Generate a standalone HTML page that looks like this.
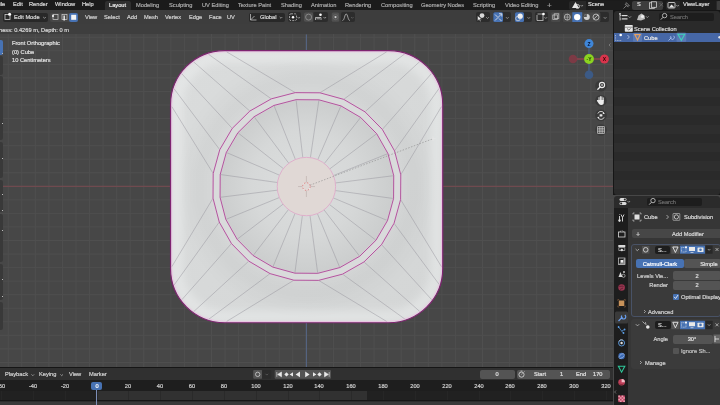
<!DOCTYPE html>
<html><head><meta charset="utf-8">
<style>
*{margin:0;padding:0;box-sizing:border-box}
html,body{width:720px;height:405px;overflow:hidden;background:#474747;font-family:"Liberation Sans",sans-serif;font-size:5.7px;color:#d0d0d0}
.a{position:absolute}
.t{position:absolute;white-space:nowrap;line-height:1;-webkit-text-stroke:0.2px currentColor;will-change:transform}
</style></head><body>
<svg width="720" height="405" style="position:absolute;left:0;top:0">
<defs>
<clipPath id="csq"><path d="M224.55,50.55 H388.75 A54.00,54.00 0 0 1 442.75,104.55 V268.75 A54.00,54.00 0 0 1 388.75,322.75 H224.55 A54.00,54.00 0 0 1 170.55,268.75 V104.55 A54.00,54.00 0 0 1 224.55,50.55 Z"/></clipPath>
<filter id="bl4" x="-20%" y="-20%" width="140%" height="140%"><feGaussianBlur stdDeviation="4"/></filter>
<filter id="bl8" x="-50%" y="-50%" width="200%" height="200%"><feGaussianBlur stdDeviation="9"/></filter>
<linearGradient id="gsq" x1="171" y1="51" x2="441" y2="322" gradientUnits="userSpaceOnUse">
<stop offset="0" stop-color="#dadcdc"/><stop offset="1" stop-color="#d4d6d6"/>
</linearGradient>
<radialGradient id="gin" cx="306.9" cy="186.5" r="88" fx="300" fy="180" gradientUnits="userSpaceOnUse">
<stop offset="0" stop-color="#dcdede"/><stop offset="0.6" stop-color="#d6d8d8"/><stop offset="1" stop-color="#cbcdcd"/>
</radialGradient>
</defs>
<path d="M8.25,23 V367M21.80,23 V367M35.35,23 V367M48.90,23 V367M62.45,23 V367M76.00,23 V367M89.55,23 V367M103.10,23 V367M116.65,23 V367M130.20,23 V367M143.75,23 V367M157.30,23 V367M170.85,23 V367M184.40,23 V367M197.95,23 V367M211.50,23 V367M225.05,23 V367M238.60,23 V367M252.15,23 V367M265.70,23 V367M279.25,23 V367M292.80,23 V367M306.35,23 V367M319.90,23 V367M333.45,23 V367M347.00,23 V367M360.55,23 V367M374.10,23 V367M387.65,23 V367M401.20,23 V367M414.75,23 V367M428.30,23 V367M441.85,23 V367M455.40,23 V367M468.95,23 V367M482.50,23 V367M496.05,23 V367M509.60,23 V367M523.15,23 V367M536.70,23 V367M550.25,23 V367M563.80,23 V367M577.35,23 V367M590.90,23 V367M604.45,23 V367M0,23.70 H613M0,37.25 H613M0,50.80 H613M0,64.35 H613M0,77.90 H613M0,91.45 H613M0,105.00 H613M0,118.55 H613M0,132.10 H613M0,145.65 H613M0,159.20 H613M0,172.75 H613M0,186.30 H613M0,199.85 H613M0,213.40 H613M0,226.95 H613M0,240.50 H613M0,254.05 H613M0,267.60 H613M0,281.15 H613M0,294.70 H613M0,308.25 H613M0,321.80 H613M0,335.35 H613M0,348.90 H613M0,362.45 H613" stroke="#4f4f4f" stroke-width="1" fill="none"/>
<path d="M0,186.3 H613" stroke="#7a4a50" stroke-width="1"/>
<path d="M306.35,34.5 V367" stroke="#56678a" stroke-width="1"/>
<path d="M224.55,50.55 H388.75 A54.00,54.00 0 0 1 442.75,104.55 V268.75 A54.00,54.00 0 0 1 388.75,322.75 H224.55 A54.00,54.00 0 0 1 170.55,268.75 V104.55 A54.00,54.00 0 0 1 224.55,50.55 Z" fill="url(#gsq)"/>
<g clip-path="url(#csq)">
<path d="M321.74,79.52 L348.93,87.01 L373.24,101.28 L393.04,121.35 L406.97,145.87 L414.07,173.15 L413.88,201.34 L406.39,228.53 L392.12,252.84 L372.05,272.64 L347.53,286.57 L320.25,293.67 L292.06,293.48 L264.87,285.99 L240.56,271.72 L220.76,251.65 L206.83,227.13 L199.73,199.85 L199.92,171.66 L207.41,144.47 L221.68,120.16 L241.75,100.36 L266.27,86.43 L293.55,79.33 Z" fill="none" stroke="#000" stroke-opacity="0.04" stroke-width="18" filter="url(#bl8)"/>
<path d="M224.55,56.55 H388.75 A48.00,48.00 0 0 1 436.75,104.55 V268.75 A48.00,48.00 0 0 1 388.75,316.75 H224.55 A48.00,48.00 0 0 1 176.55,268.75 V104.55 A48.00,48.00 0 0 1 224.55,56.55 Z" fill="none" stroke="#f4f6f6" stroke-opacity="0.42" stroke-width="12" filter="url(#bl4)"/>
</g>
<path d="M224.55,51.85 H388.75 A52.70,52.70 0 0 1 441.45,104.55 V268.75 A52.70,52.70 0 0 1 388.75,321.45 H224.55 A52.70,52.70 0 0 1 171.85,268.75 V104.55 A52.70,52.70 0 0 1 224.55,51.85 Z" fill="none" stroke="#ecc4e4" stroke-width="1.0" opacity="0.9"/>
<path d="M224.55,50.55 H388.75 A54.00,54.00 0 0 1 442.75,104.55 V268.75 A54.00,54.00 0 0 1 388.75,322.75 H224.55 A54.00,54.00 0 0 1 170.55,268.75 V104.55 A54.00,54.00 0 0 1 224.55,50.55 Z" fill="none" stroke="#7e2470" stroke-width="1.2"/>
<path d="M319.90,92.80 L386.65,51.85M343.71,99.36 L404.55,54.05M365.01,111.85 L419.65,61.65M382.35,129.44 L431.40,73.65M394.55,150.91 L439.05,88.45M400.77,174.81 L441.45,106.65M400.60,199.50 L441.45,266.65M394.04,223.31 L439.25,284.55M381.55,244.61 L431.65,299.65M363.96,261.95 L419.65,311.40M342.49,274.15 L404.85,319.05M318.59,280.37 L386.65,321.45M293.90,280.20 L226.65,321.45M270.09,273.64 L208.75,319.25M248.79,261.15 L193.65,311.65M231.45,243.56 L181.90,299.65M219.25,222.09 L174.25,284.85M213.03,198.19 L171.85,266.65M213.20,173.50 L171.85,106.65M219.76,149.69 L174.05,88.75M232.25,128.39 L181.65,73.65M249.84,111.05 L193.65,61.90M271.31,98.85 L208.45,54.25M295.21,92.63 L226.65,51.85" stroke="#8c8a92" stroke-width="0.42" fill="none"/>
<path d="M319.90,92.80 L343.71,99.36 L365.01,111.85 L382.35,129.44 L394.55,150.91 L400.77,174.81 L400.60,199.50 L394.04,223.31 L381.55,244.61 L363.96,261.95 L342.49,274.15 L318.59,280.37 L293.90,280.20 L270.09,273.64 L248.79,261.15 L231.45,243.56 L219.25,222.09 L213.03,198.19 L213.20,173.50 L219.76,149.69 L232.25,128.39 L249.84,111.05 L271.31,98.85 L295.21,92.63 Z" fill="#d9dbdb"/>
<path d="M318.93,99.83 L340.95,105.90 L360.65,117.46 L376.69,133.72 L387.97,153.58 L393.73,175.68 L393.57,198.53 L387.50,220.55 L375.94,240.25 L359.68,256.29 L339.82,267.57 L317.72,273.33 L294.87,273.17 L272.85,267.10 L253.15,255.54 L237.11,239.28 L225.83,219.42 L220.07,197.32 L220.23,174.47 L226.30,152.45 L237.86,132.75 L254.12,116.71 L273.98,105.43 L296.08,99.67 Z" fill="url(#gin)"/>
<path d="M318.93,99.83 L310.41,157.63M340.95,105.90 L317.76,159.65M360.65,117.46 L324.34,163.51M376.69,133.72 L329.69,168.94M387.97,153.58 L333.45,175.56M393.73,175.68 L335.38,182.94M393.57,198.53 L335.32,190.56M387.50,220.55 L333.30,197.91M375.94,240.25 L329.44,204.49M359.68,256.29 L324.01,209.84M339.82,267.57 L317.39,213.60M317.72,273.33 L310.01,215.53M294.87,273.17 L302.39,215.47M272.85,267.10 L295.04,213.45M253.15,255.54 L288.46,209.59M237.11,239.28 L283.11,204.16M225.83,219.42 L279.35,197.54M220.07,197.32 L277.42,190.16M220.23,174.47 L277.48,182.54M226.30,152.45 L279.50,175.19M237.86,132.75 L283.36,168.61M254.12,116.71 L288.79,163.26M273.98,105.43 L295.41,159.50M296.08,99.67 L302.79,157.57" stroke="#8c8a92" stroke-width="0.42" fill="none"/>
<path d="M319.90,92.80 L343.71,99.36 L365.01,111.85 L382.35,129.44 L394.55,150.91 L400.77,174.81 L400.60,199.50 L394.04,223.31 L381.55,244.61 L363.96,261.95 L342.49,274.15 L318.59,280.37 L293.90,280.20 L270.09,273.64 L248.79,261.15 L231.45,243.56 L219.25,222.09 L213.03,198.19 L213.20,173.50 L219.76,149.69 L232.25,128.39 L249.84,111.05 L271.31,98.85 L295.21,92.63 ZM318.93,99.83 L340.95,105.90 L360.65,117.46 L376.69,133.72 L387.97,153.58 L393.73,175.68 L393.57,198.53 L387.50,220.55 L375.94,240.25 L359.68,256.29 L339.82,267.57 L317.72,273.33 L294.87,273.17 L272.85,267.10 L253.15,255.54 L237.11,239.28 L225.83,219.42 L220.07,197.32 L220.23,174.47 L226.30,152.45 L237.86,132.75 L254.12,116.71 L273.98,105.43 L296.08,99.67 Z" fill="none" stroke="#f0c4e4" stroke-width="1.8" opacity="0.4"/>
<path d="M319.90,92.80 L343.71,99.36 L365.01,111.85 L382.35,129.44 L394.55,150.91 L400.77,174.81 L400.60,199.50 L394.04,223.31 L381.55,244.61 L363.96,261.95 L342.49,274.15 L318.59,280.37 L293.90,280.20 L270.09,273.64 L248.79,261.15 L231.45,243.56 L219.25,222.09 L213.03,198.19 L213.20,173.50 L219.76,149.69 L232.25,128.39 L249.84,111.05 L271.31,98.85 L295.21,92.63 ZM318.93,99.83 L340.95,105.90 L360.65,117.46 L376.69,133.72 L387.97,153.58 L393.73,175.68 L393.57,198.53 L387.50,220.55 L375.94,240.25 L359.68,256.29 L339.82,267.57 L317.72,273.33 L294.87,273.17 L272.85,267.10 L253.15,255.54 L237.11,239.28 L225.83,219.42 L220.07,197.32 L220.23,174.47 L226.30,152.45 L237.86,132.75 L254.12,116.71 L273.98,105.43 L296.08,99.67 Z" fill="none" stroke="#a03088" stroke-width="0.75"/>
<circle cx="306.4" cy="186.55" r="29.2" fill="#e0d8d5" stroke="#e0a4c8" stroke-width="0.8"/>
<path d="M310,185.2 L433,138.7" stroke="#8a8a8a" stroke-width="0.6" stroke-dasharray="1.5,1.5"/>
</svg>
<div class="a" style="left:0px;top:0px;width:720px;height:10.4px;background:#1b1b1b;border-radius:0px;"></div>
<div class="t" style="left:-3.8px;top:2.10px;color:#d8d8d8;font-size:5.7px;">File</div>
<div class="t" style="left:12.6px;top:2.10px;color:#d8d8d8;font-size:5.7px;">Edit</div>
<div class="t" style="left:29.0px;top:2.10px;color:#d8d8d8;font-size:5.7px;">Render</div>
<div class="t" style="left:54.5px;top:2.10px;color:#d8d8d8;font-size:5.7px;">Window</div>
<div class="t" style="left:81.5px;top:2.10px;color:#d8d8d8;font-size:5.7px;">Help</div>
<div class="a" style="left:104.7px;top:0.7px;width:26.4px;height:9.7px;background:#2f2f2f;border-radius:2px 2px 0 0px;"></div>
<div class="t" style="left:109.4px;top:2.70px;color:#e8e8e8;font-size:5.7px;">Layout</div>
<div class="t" style="left:135.8px;top:2.70px;color:#a8a8a8;font-size:5.7px;">Modeling</div>
<div class="t" style="left:168.8px;top:2.70px;color:#a8a8a8;font-size:5.7px;">Sculpting</div>
<div class="t" style="left:202.3px;top:2.70px;color:#a8a8a8;font-size:5.7px;">UV Editing</div>
<div class="t" style="left:237.8px;top:2.70px;color:#a8a8a8;font-size:5.7px;">Texture Paint</div>
<div class="t" style="left:280.8px;top:2.70px;color:#a8a8a8;font-size:5.7px;">Shading</div>
<div class="t" style="left:310.8px;top:2.70px;color:#a8a8a8;font-size:5.7px;">Animation</div>
<div class="t" style="left:345.3px;top:2.70px;color:#a8a8a8;font-size:5.7px;">Rendering</div>
<div class="t" style="left:380.8px;top:2.70px;color:#a8a8a8;font-size:5.7px;">Compositing</div>
<div class="t" style="left:421.3px;top:2.70px;color:#a8a8a8;font-size:5.7px;">Geometry Nodes</div>
<div class="t" style="left:472.8px;top:2.70px;color:#a8a8a8;font-size:5.7px;">Scripting</div>
<div class="t" style="left:504.8px;top:2.70px;color:#a8a8a8;font-size:5.7px;">Video Editing</div>
<div class="t" style="left:546.5px;top:1.73px;color:#a0a0a0;font-size:8px;">+</div>
<div class="a" style="left:568.9px;top:1px;width:64px;height:8.6px;background:#282828;border-radius:2px;"></div>
<div class="a" style="left:585.5px;top:1px;width:46px;height:8.6px;background:#1d1d1d;border-radius:0px;"></div>
<div class="t" style="left:587.8px;top:2.30px;color:#dcdcdc;font-size:5.7px;">Scene</div>
<div class="a" style="left:632.2px;top:1px;width:30.5px;height:8.6px;background:#3d3d3d;border-radius:2px;"></div>
<div class="t" style="left:636.8px;top:2.30px;color:#dcdcdc;font-size:5.7px;">S</div>
<div class="a" style="left:666px;top:1px;width:54px;height:8.6px;background:#282828;border-radius:2px;"></div>
<div class="a" style="left:680px;top:1px;width:36px;height:8.6px;background:#1d1d1d;border-radius:0px;"></div>
<div class="t" style="left:683.3px;top:2.30px;color:#dcdcdc;font-size:5.7px;">ViewLayer</div>
<div class="a" style="left:716.5px;top:1px;width:4px;height:8.6px;background:#3d3d3d;border-radius:1px;"></div>
<div class="a" style="left:0px;top:10.4px;width:613px;height:13.2px;background:#3d3d3d;border-radius:0px;"></div>
<div class="a" style="left:3.3px;top:12.8px;width:44.8px;height:9.2px;background:#282828;border-radius:2px;"></div>
<div class="t" style="left:13.8px;top:15.20px;color:#d8d8d8;font-size:5.7px;">Edit Mode</div>
<div class="t" style="left:85px;top:15.20px;color:#d0d0d0;font-size:5.7px;">View</div>
<div class="t" style="left:104px;top:15.20px;color:#d0d0d0;font-size:5.7px;">Select</div>
<div class="t" style="left:126.8px;top:15.20px;color:#d0d0d0;font-size:5.7px;">Add</div>
<div class="t" style="left:143.8px;top:15.20px;color:#d0d0d0;font-size:5.7px;">Mesh</div>
<div class="t" style="left:164.8px;top:15.20px;color:#d0d0d0;font-size:5.7px;">Vertex</div>
<div class="t" style="left:188.8px;top:15.20px;color:#d0d0d0;font-size:5.7px;">Edge</div>
<div class="t" style="left:208.8px;top:15.20px;color:#d0d0d0;font-size:5.7px;">Face</div>
<div class="t" style="left:227.3px;top:15.20px;color:#d0d0d0;font-size:5.7px;">UV</div>
<div class="a" style="left:249px;top:12.8px;width:35.5px;height:9.2px;background:#282828;border-radius:2px;"></div>
<div class="t" style="left:259.5px;top:15.20px;color:#d8d8d8;font-size:5.7px;">Global</div>
<div class="a" style="left:50.3px;top:12.8px;width:28px;height:9.2px;background:#474747;border-radius:2px;"></div>
<div class="a" style="left:69.2px;top:12.8px;width:9.1px;height:9.2px;background:#4772b3;border-radius:2px;"></div>
<div class="a" style="left:287.5px;top:12.4px;width:13.300000000000011px;height:9.5px;background:#2c2c2c;border-radius:2px;"></div>
<div class="a" style="left:313.3px;top:12.4px;width:15.0px;height:9.5px;background:#2c2c2c;border-radius:2px;"></div>
<div class="a" style="left:340.5px;top:12.4px;width:14.5px;height:9.5px;background:#2c2c2c;border-radius:2px;"></div>
<div class="a" style="left:475.8px;top:12.2px;width:14.599999999999966px;height:9.8px;background:#2c2c2c;border-radius:2px;"></div>
<div class="a" style="left:493.3px;top:12.2px;width:17.69999999999999px;height:9.8px;background:#2c2c2c;border-radius:2px;"></div>
<div class="a" style="left:515px;top:12.2px;width:17px;height:9.8px;background:#2c2c2c;border-radius:2px;"></div>
<div class="a" style="left:535px;top:12.2px;width:12.799999999999955px;height:9.8px;background:#2c2c2c;border-radius:2px;"></div>
<div class="a" style="left:562.4px;top:12.2px;width:46.35000000000002px;height:9.8px;background:#2c2c2c;border-radius:2px;"></div>
<div class="a" style="left:0px;top:23.6px;width:613px;height:10.8px;background:#3e3e3e;border-radius:0px;"></div>
<div class="t" style="left:-1.5px;top:27.50px;color:#d8d8d8;font-size:5.7px;">ness: 0.4269 m, Depth: 0 m</div>
<div class="a" style="left:-3px;top:40px;width:6px;height:14.8px;background:#4772b3;border-radius:2px;"></div>
<div class="a" style="left:-3px;top:55.5px;width:6px;height:19.0px;background:#393939;border-radius:2px;"></div>
<div class="a" style="left:-3px;top:76px;width:6px;height:64px;background:#393939;border-radius:2px;"></div>
<div class="a" style="left:-3px;top:142px;width:6px;height:36px;background:#393939;border-radius:2px;"></div>
<div class="a" style="left:-3px;top:179.5px;width:6px;height:32.5px;background:#393939;border-radius:2px;"></div>
<div class="a" style="left:-3px;top:213.5px;width:6px;height:48.5px;background:#393939;border-radius:2px;"></div>
<div class="a" style="left:-3px;top:263.5px;width:6px;height:36.5px;background:#393939;border-radius:2px;"></div>
<div class="a" style="left:-3px;top:301.5px;width:6px;height:28.5px;background:#393939;border-radius:2px;"></div>
<div class="a" style="left:2px;top:52.5px;width:1px;height:1px;background:#bbbbbb;border-radius:0px;"></div>
<div class="a" style="left:2px;top:122.5px;width:1px;height:1px;background:#bbbbbb;border-radius:0px;"></div>
<div class="a" style="left:2px;top:158px;width:1px;height:1px;background:#bbbbbb;border-radius:0px;"></div>
<div class="a" style="left:2px;top:193.5px;width:1px;height:1px;background:#bbbbbb;border-radius:0px;"></div>
<div class="a" style="left:2px;top:210px;width:1px;height:1px;background:#bbbbbb;border-radius:0px;"></div>
<div class="a" style="left:2px;top:230px;width:1px;height:1px;background:#bbbbbb;border-radius:0px;"></div>
<div class="a" style="left:2px;top:279px;width:1px;height:1px;background:#bbbbbb;border-radius:0px;"></div>
<div class="a" style="left:2px;top:295.5px;width:1px;height:1px;background:#bbbbbb;border-radius:0px;"></div>
<div class="t" style="left:11.8px;top:40.90px;color:#e0e0e0;font-size:5.7px;">Front Orthographic</div>
<div class="t" style="left:11.8px;top:49.60px;color:#e0e0e0;font-size:5.7px;">(0) Cube</div>
<div class="t" style="left:11.8px;top:58.30px;color:#e0e0e0;font-size:5.7px;">10 Centimeters</div>
<div class="a" style="left:613px;top:10px;width:107px;height:185px;background:#161616;border-radius:0px;"></div>
<div class="a" style="left:614px;top:10.6px;width:106px;height:184px;background:#2a2a2a;border-radius:3px;"></div>
<div class="a" style="left:614px;top:51.0px;width:106px;height:9.2px;background:#2e2e2e;border-radius:0px;"></div>
<div class="a" style="left:614px;top:69.4px;width:106px;height:9.2px;background:#2e2e2e;border-radius:0px;"></div>
<div class="a" style="left:614px;top:87.80000000000001px;width:106px;height:9.2px;background:#2e2e2e;border-radius:0px;"></div>
<div class="a" style="left:614px;top:106.20000000000002px;width:106px;height:9.2px;background:#2e2e2e;border-radius:0px;"></div>
<div class="a" style="left:614px;top:124.60000000000002px;width:106px;height:9.2px;background:#2e2e2e;border-radius:0px;"></div>
<div class="a" style="left:614px;top:143.00000000000003px;width:106px;height:9.2px;background:#2e2e2e;border-radius:0px;"></div>
<div class="a" style="left:614px;top:161.40000000000003px;width:106px;height:9.2px;background:#2e2e2e;border-radius:0px;"></div>
<div class="a" style="left:614px;top:179.80000000000004px;width:106px;height:9.2px;background:#2e2e2e;border-radius:0px;"></div>
<div class="t" style="left:634.4px;top:26.50px;color:#d8d8d8;font-size:5.7px;">Scene Collection</div>
<div class="a" style="left:614px;top:32.6px;width:106px;height:9.2px;background:#4667a6;border-radius:0px;"></div>
<div class="t" style="left:644.4px;top:36.20px;color:#e8e8e8;font-size:5.7px;">Cube</div>
<div class="a" style="left:659px;top:12.6px;width:55px;height:8.6px;background:#1d1d1d;border-radius:2px;"></div>
<div class="t" style="left:670.4px;top:15.10px;color:#6a6a6a;font-size:5.7px;">Search</div>
<div class="a" style="left:614px;top:196px;width:106px;height:209px;background:#2b2b2b;border-radius:3px;"></div>
<div class="a" style="left:614px;top:208px;width:13.7px;height:197px;background:#1d1d1d;border-radius:0px;"></div>
<div class="a" style="left:627.7px;top:208px;width:92.3px;height:197px;background:#363636;border-radius:0px;"></div>
<div class="a" style="left:646.7px;top:197.6px;width:55.7px;height:8.7px;background:#1d1d1d;border-radius:2px;"></div>
<div class="t" style="left:658px;top:200.10px;color:#6a6a6a;font-size:5.7px;">Search</div>
<div class="t" style="left:644px;top:215.10px;color:#d8d8d8;font-size:5.7px;">Cube</div>
<div class="t" style="left:684px;top:215.10px;color:#d8d8d8;font-size:5.7px;">Subdivision</div>
<div class="a" style="left:631.7px;top:229.4px;width:90px;height:9px;background:#474747;border-radius:2px;"></div>
<div class="t" style="left:636px;top:231.41px;color:#d0d0d0;font-size:7px;">+</div>
<div class="t" style="left:672px;top:232.10px;color:#d8d8d8;font-size:5.7px;">Add Modifier</div>
<div class="a" style="left:631.2px;top:243.8px;width:90px;height:73.2px;background:#3a3a3a;border-radius:3px;border:0.8px solid #485266"></div>
<div class="a" style="left:654.8px;top:245.7px;width:15.5px;height:8.2px;background:#1d1d1d;border-radius:2px;"></div>
<div class="t" style="left:657.5px;top:248.10px;color:#d8d8d8;font-size:5.7px;">S...</div>
<div class="a" style="left:635.8px;top:259.3px;width:48.2px;height:9px;background:#4772b3;border-radius:2px;"></div>
<div class="a" style="left:684px;top:259.3px;width:37px;height:9px;background:#545454;border-radius:2px;"></div>
<div class="t" style="left:630.0px;top:262.10px;width:60px;text-align:center;color:#ffffff;font-size:5.7px;">Catmull-Clark</div>
<div class="t" style="left:679.0px;top:262.10px;width:60px;text-align:center;color:#e0e0e0;font-size:5.7px;">Simple</div>
<div class="t" style="left:588.4px;top:273.90px;width:80px;text-align:right;color:#d0d0d0;font-size:5.7px;">Levels Vie...</div>
<div class="a" style="left:673px;top:271.2px;width:48px;height:9px;background:#545454;border-radius:2px;"></div>
<div class="t" style="left:667.0px;top:273.90px;width:60px;text-align:center;color:#e0e0e0;font-size:5.7px;">2</div>
<div class="t" style="left:588.4px;top:283.40px;width:80px;text-align:right;color:#d0d0d0;font-size:5.7px;">Render</div>
<div class="a" style="left:673px;top:280.6px;width:48px;height:9px;background:#545454;border-radius:2px;"></div>
<div class="t" style="left:667.0px;top:283.40px;width:60px;text-align:center;color:#e0e0e0;font-size:5.7px;">2</div>
<div class="a" style="left:673px;top:294px;width:5.6px;height:5.6px;background:#4772b3;border-radius:1px;"></div>
<div class="t" style="left:680.5px;top:295.10px;color:#d8d8d8;font-size:5.7px;">Optimal Display</div>
<div class="t" style="left:648px;top:310.30px;color:#d0d0d0;font-size:5.7px;">Advanced</div>
<div class="a" style="left:631.2px;top:318.5px;width:90px;height:50.5px;background:#3b3b3b;border-radius:3px;"></div>
<div class="a" style="left:655px;top:320.7px;width:15.5px;height:8.5px;background:#1d1d1d;border-radius:2px;"></div>
<div class="t" style="left:657.5px;top:323.30px;color:#d8d8d8;font-size:5.7px;">S...</div>
<div class="t" style="left:588px;top:337.30px;width:80px;text-align:right;color:#d0d0d0;font-size:5.7px;">Angle</div>
<div class="a" style="left:673px;top:334.5px;width:40px;height:9px;background:#545454;border-radius:2px;"></div>
<div class="t" style="left:662.0px;top:337.30px;width:60px;text-align:center;color:#e0e0e0;font-size:5.7px;">30°</div>
<div class="a" style="left:673px;top:348px;width:5.6px;height:5.6px;background:#545454;border-radius:1px;"></div>
<div class="t" style="left:680.5px;top:349.10px;color:#c0c0c0;font-size:5.7px;">Ignore Sh...</div>
<div class="t" style="left:645px;top:361.30px;color:#d0d0d0;font-size:5.7px;">Manage</div>
<div class="a" style="left:0px;top:367px;width:613px;height:38px;background:#161616;border-radius:0px;"></div>
<div class="a" style="left:0px;top:367.5px;width:612.5px;height:12.5px;background:#303030;border-radius:0px;"></div>
<div class="t" style="left:4.6px;top:372.40px;color:#d0d0d0;font-size:5.7px;">Playback</div>
<div class="t" style="left:39px;top:372.40px;color:#d0d0d0;font-size:5.7px;">Keying</div>
<div class="t" style="left:68.7px;top:372.40px;color:#d0d0d0;font-size:5.7px;">View</div>
<div class="t" style="left:88.5px;top:372.40px;color:#d0d0d0;font-size:5.7px;">Marker</div>
<div class="a" style="left:480px;top:369.8px;width:34.5px;height:9.2px;background:#545454;border-radius:2px;"></div>
<div class="t" style="left:467.0px;top:372.00px;width:60px;text-align:center;color:#e0e0e0;font-size:5.7px;">0</div>
<div class="a" style="left:517px;top:369.8px;width:93px;height:9.2px;background:#545454;border-radius:2px;"></div>
<div class="t" style="left:534px;top:372.00px;color:#e0e0e0;font-size:5.7px;">Start</div>
<div class="t" style="left:560px;top:372.00px;color:#e0e0e0;font-size:5.7px;">1</div>
<div class="t" style="left:576px;top:372.00px;color:#e0e0e0;font-size:5.7px;">End</div>
<div class="t" style="left:592.5px;top:372.00px;color:#e0e0e0;font-size:5.7px;">170</div>
<div class="a" style="left:0px;top:380px;width:612.5px;height:11.2px;background:#1e1e1e;border-radius:0px;"></div>
<div class="a" style="left:0px;top:391.2px;width:612.5px;height:9.3px;background:#212121;border-radius:0px;"></div>
<div class="a" style="left:98.1px;top:391.2px;width:269.1px;height:9.3px;background:#313131;border-radius:0px;"></div>
<div class="a" style="left:0.980000000000004px;top:391.2px;width:0.8px;height:9.3px;background:#262626;border-radius:0px;"></div>
<div class="a" style="left:32.82px;top:391.2px;width:0.8px;height:9.3px;background:#262626;border-radius:0px;"></div>
<div class="a" style="left:64.66px;top:391.2px;width:0.8px;height:9.3px;background:#262626;border-radius:0px;"></div>
<div class="a" style="left:96.5px;top:391.2px;width:0.8px;height:9.3px;background:#262626;border-radius:0px;"></div>
<div class="a" style="left:128.34px;top:391.2px;width:0.8px;height:9.3px;background:#2a2a2a;border-radius:0px;"></div>
<div class="a" style="left:160.18px;top:391.2px;width:0.8px;height:9.3px;background:#2a2a2a;border-radius:0px;"></div>
<div class="a" style="left:192.01999999999998px;top:391.2px;width:0.8px;height:9.3px;background:#2a2a2a;border-radius:0px;"></div>
<div class="a" style="left:223.86px;top:391.2px;width:0.8px;height:9.3px;background:#2a2a2a;border-radius:0px;"></div>
<div class="a" style="left:255.7px;top:391.2px;width:0.8px;height:9.3px;background:#2a2a2a;border-radius:0px;"></div>
<div class="a" style="left:287.53999999999996px;top:391.2px;width:0.8px;height:9.3px;background:#2a2a2a;border-radius:0px;"></div>
<div class="a" style="left:319.38px;top:391.2px;width:0.8px;height:9.3px;background:#2a2a2a;border-radius:0px;"></div>
<div class="a" style="left:351.22px;top:391.2px;width:0.8px;height:9.3px;background:#2a2a2a;border-radius:0px;"></div>
<div class="a" style="left:383.06px;top:391.2px;width:0.8px;height:9.3px;background:#262626;border-radius:0px;"></div>
<div class="a" style="left:414.9px;top:391.2px;width:0.8px;height:9.3px;background:#262626;border-radius:0px;"></div>
<div class="a" style="left:446.74px;top:391.2px;width:0.8px;height:9.3px;background:#262626;border-radius:0px;"></div>
<div class="a" style="left:478.58px;top:391.2px;width:0.8px;height:9.3px;background:#262626;border-radius:0px;"></div>
<div class="a" style="left:510.42px;top:391.2px;width:0.8px;height:9.3px;background:#262626;border-radius:0px;"></div>
<div class="a" style="left:542.26px;top:391.2px;width:0.8px;height:9.3px;background:#262626;border-radius:0px;"></div>
<div class="a" style="left:574.1px;top:391.2px;width:0.8px;height:9.3px;background:#262626;border-radius:0px;"></div>
<div class="a" style="left:605.94px;top:391.2px;width:0.8px;height:9.3px;background:#262626;border-radius:0px;"></div>
<div class="a" style="left:0px;top:400.5px;width:612.5px;height:4.5px;background:#393939;border-radius:0px;"></div>
<div class="a" style="left:0px;top:400.8px;width:612.5px;height:0.6px;background:#2c2c2c;border-radius:0px;"></div>
<div class="t" style="left:-29.019999999999996px;top:384.10px;width:60px;text-align:center;color:#d0d0d0;font-size:5.7px;">-60</div>
<div class="t" style="left:2.8200000000000003px;top:384.10px;width:60px;text-align:center;color:#d0d0d0;font-size:5.7px;">-40</div>
<div class="t" style="left:34.66px;top:384.10px;width:60px;text-align:center;color:#d0d0d0;font-size:5.7px;">-20</div>
<div class="t" style="left:98.34px;top:384.10px;width:60px;text-align:center;color:#d0d0d0;font-size:5.7px;">20</div>
<div class="t" style="left:130.18px;top:384.10px;width:60px;text-align:center;color:#d0d0d0;font-size:5.7px;">40</div>
<div class="t" style="left:162.01999999999998px;top:384.10px;width:60px;text-align:center;color:#d0d0d0;font-size:5.7px;">60</div>
<div class="t" style="left:193.86px;top:384.10px;width:60px;text-align:center;color:#d0d0d0;font-size:5.7px;">80</div>
<div class="t" style="left:225.7px;top:384.10px;width:60px;text-align:center;color:#d0d0d0;font-size:5.7px;">100</div>
<div class="t" style="left:257.53999999999996px;top:384.10px;width:60px;text-align:center;color:#d0d0d0;font-size:5.7px;">120</div>
<div class="t" style="left:289.38px;top:384.10px;width:60px;text-align:center;color:#d0d0d0;font-size:5.7px;">140</div>
<div class="t" style="left:321.22px;top:384.10px;width:60px;text-align:center;color:#d0d0d0;font-size:5.7px;">160</div>
<div class="t" style="left:353.06px;top:384.10px;width:60px;text-align:center;color:#d0d0d0;font-size:5.7px;">180</div>
<div class="t" style="left:384.9px;top:384.10px;width:60px;text-align:center;color:#d0d0d0;font-size:5.7px;">200</div>
<div class="t" style="left:416.74px;top:384.10px;width:60px;text-align:center;color:#d0d0d0;font-size:5.7px;">220</div>
<div class="t" style="left:448.58px;top:384.10px;width:60px;text-align:center;color:#d0d0d0;font-size:5.7px;">240</div>
<div class="t" style="left:480.42px;top:384.10px;width:60px;text-align:center;color:#d0d0d0;font-size:5.7px;">260</div>
<div class="t" style="left:512.26px;top:384.10px;width:60px;text-align:center;color:#d0d0d0;font-size:5.7px;">280</div>
<div class="t" style="left:544.1px;top:384.10px;width:60px;text-align:center;color:#d0d0d0;font-size:5.7px;">300</div>
<div class="t" style="left:575.94px;top:384.10px;width:60px;text-align:center;color:#d0d0d0;font-size:5.7px;">320</div>
<div class="a" style="left:96.1px;top:389px;width:0.8px;height:16px;background:#7d8fb8;border-radius:0px;"></div>
<div class="a" style="left:90.8px;top:381.9px;width:11.6px;height:7.9px;background:#4772b3;border-radius:2px;"></div>
<div class="t" style="left:66.6px;top:384.10px;width:60px;text-align:center;color:#ffffff;font-size:5.7px;">0</div><svg width="720" height="405" style="position:absolute;left:0;top:0"><path d="M572,8 L575.5,2 L579,8 Z" fill="#e6e6e6"/><circle cx="577.5" cy="6.5" r="2" fill="none" stroke="#e6e6e6" stroke-width="0.8"/><path d="M580.5,5 L581.8,6.3 L583.1,5" stroke="#bbb" stroke-width="0.7" fill="none"/><path d="M623.5,8.5 L626,6 M625,4.2 L628,7.2 M626.3,2.6 L629.4,5.7 L627.7,6.2 L625.8,4.3 Z" stroke="#9a9a9a" stroke-width="0.7" fill="none"/><rect x="649.5" y="2.8" width="5" height="5.5" fill="none" stroke="#e6e6e6" stroke-width="0.7"/><rect x="651.5" y="1.8" width="5" height="5.5" fill="#3d3d3d" stroke="#e6e6e6" stroke-width="0.7"/><path d="M659.5,3 L663,6.5 M663,3 L659.5,6.5" stroke="#777" stroke-width="0.6"/><rect x="668" y="2.5" width="7" height="5.5" rx="0.8" fill="none" stroke="#e6e6e6" stroke-width="0.8"/><path d="M669,7.5 L671.5,4.5 L674.5,7.5 Z" fill="#e6e6e6"/><path d="M676.3,5 L677.6,6.3 L678.9,5" stroke="#bbb" stroke-width="0.7" fill="none"/><rect x="5" y="14.5" width="5" height="5" fill="none" stroke="#cfcfcf" stroke-width="0.8"/><circle cx="9.6" cy="14.2" r="1.5" fill="#fff"/><path d="M43.2,17 L44.5,18.3 L45.8,17" stroke="#bbb" stroke-width="0.7" fill="none"/><rect x="53" y="14.5" width="5" height="5" fill="none" stroke="#cfcfcf" stroke-width="0.7"/><circle cx="53" cy="16" r="1" fill="#fff"/><rect x="62" y="14.5" width="5" height="5" fill="none" stroke="#cfcfcf" stroke-width="0.7"/><rect x="63.5" y="15.5" width="1.3" height="5" fill="#fff"/><rect x="71.2" y="14.8" width="5" height="5" fill="#f4f4f4"/><path d="M250.5,14 V20 H256.5 M250.5,20 L254.5,16" stroke="#d0d0d0" stroke-width="0.7" fill="none"/><path d="M279.7,17 L281.0,18.3 L282.3,17" stroke="#bbb" stroke-width="0.7" fill="none"/><rect x="289.5" y="13.8" width="7" height="6.8" rx="1.5" fill="none" stroke="#d0d0d0" stroke-width="0.7" stroke-dasharray="2,1.2"/><circle cx="293" cy="17.2" r="1.2" fill="#fff"/><path d="M297.5,17 L298.8,18.3 L300.1,17" stroke="#bbb" stroke-width="0.7" fill="none"/><rect x="304" y="12.4" width="9.3" height="9.4" rx="1.5" fill="#505050"/><circle cx="308.6" cy="17.1" r="3" fill="none" stroke="#888" stroke-width="1"/><path d="M315.5,20 V17.5 H321 V20 M316.5,18.8 H320" stroke="#ddd" stroke-width="0.7" fill="none"/><circle cx="320.5" cy="14.8" r="1.3" fill="#fff"/><path d="M323.5,17 L324.8,18.3 L326.1,17" stroke="#bbb" stroke-width="0.7" fill="none"/><rect x="331.7" y="12.4" width="7.5" height="9.4" rx="1.5" fill="#505050"/><circle cx="335.5" cy="17.1" r="1.1" fill="#cfcfcf"/><circle cx="335.5" cy="17.1" r="2.6" fill="none" stroke="#777" stroke-width="0.5"/><path d="M342.5,20.5 C344.5,20.5 344.6,14 346.2,14 C347.8,14 347.9,20.5 349.9,20.5" stroke="#cfcfcf" stroke-width="0.7" fill="none"/><path d="M351,17 L352.3,18.3 L353.6,17" stroke="#666" stroke-width="0.7" fill="none"/><circle cx="482" cy="15.6" r="2.4" fill="#d8d8d8"/><path d="M477.6,15.8 L477.6,21 L479,19.6 L480.2,21.6 L481,21.2 L479.9,19.2 L481.8,19.2 Z" fill="#f0f0f0" stroke="#2c2c2c" stroke-width="0.4"/><path d="M486.2,17.2 L487.5,18.5 L488.8,17.2" stroke="#bbb" stroke-width="0.7" fill="none"/><rect x="493.3" y="12.2" width="9.7" height="9.8" rx="1.5" fill="#4772b3"/><path d="M495,20.5 L501.5,14 M495,14.5 L497.5,17 M499,18.5 L501.5,21" stroke="#e8e8e8" stroke-width="0.8" fill="none"/><path d="M499,13.7 H501.8 V16.5" stroke="#e8e8e8" stroke-width="0.8" fill="none"/><path d="M506,17.2 L507.3,18.5 L508.6,17.2" stroke="#bbb" stroke-width="0.7" fill="none"/><rect x="515" y="12.2" width="9" height="9.8" rx="1.5" fill="#4772b3"/><circle cx="520.2" cy="16.2" r="2.6" fill="#f0f0f0"/><circle cx="518" cy="18.5" r="2.3" fill="none" stroke="#e0e0e0" stroke-width="0.7"/><path d="M527.5,17.2 L528.8,18.5 L530.1,17.2" stroke="#bbb" stroke-width="0.7" fill="none"/><path d="M537,15 V20.5 H543.5 M537.5,14 H543 V20" stroke="#ddd" stroke-width="0.7" fill="none"/><circle cx="543.5" cy="14" r="1.3" fill="#fff"/><path d="M544.5,17.2 L545.8,18.5 L547.1,17.2" stroke="#bbb" stroke-width="0.7" fill="none"/><rect x="551" y="12.2" width="9.3" height="9.8" rx="1.5" fill="#484848"/><rect x="552.8" y="15" width="4.6" height="4.6" fill="none" stroke="#c8c8c8" stroke-width="0.7"/><rect x="554.2" y="13.8" width="4.6" height="4.6" fill="none" stroke="#c8c8c8" stroke-width="0.7"/><rect x="562.4" y="12.2" width="38" height="9.8" rx="1.5" fill="#484848"/><rect x="572.3" y="12.2" width="9.9" height="9.8" fill="#4772b3"/><circle cx="567.3" cy="17.1" r="3" fill="none" stroke="#cfcfcf" stroke-width="0.7"/><path d="M564.3,17.1 H570.3 M567.3,14.1 V20.1" stroke="#cfcfcf" stroke-width="0.5"/><circle cx="577.2" cy="17.1" r="3.2" fill="#ffffff"/><circle cx="586.8" cy="17.1" r="3" fill="#cfcfcf"/><path d="M586.8,14.1 A3,3 0 0 0 583.8,17.1 L586.8,17.1 Z" fill="#555"/><circle cx="596" cy="17.1" r="3" fill="none" stroke="#cfcfcf" stroke-width="0.8"/><path d="M593.8,19 L598,15" stroke="#cfcfcf" stroke-width="0.8"/><path d="M603.8,17.2 L605.0999999999999,18.5 L606.4,17.2" stroke="#bbb" stroke-width="0.7" fill="none"/><path d="M573,59 H604.5" stroke="#b44050" stroke-width="1"/><path d="M589,43.6 V75" stroke="#4a6a9a" stroke-width="1"/><circle cx="573" cy="59" r="4.3" fill="#7c3a45"/><circle cx="589" cy="74.8" r="4.3" fill="#3c5a85"/><circle cx="604.4" cy="59" r="4.5" fill="#d8344c"/><text x="604.4" y="61" font-size="5" text-anchor="middle" fill="#300" font-family="Liberation Sans" font-weight="bold">X</text><circle cx="589" cy="43.6" r="4.5" fill="#3f86d8"/><text x="589" y="45.6" font-size="5" text-anchor="middle" fill="#001030" font-family="Liberation Sans" font-weight="bold">Z</text><circle cx="589" cy="59" r="4.9" fill="#8bd320"/><text x="589" y="61" font-size="5" text-anchor="middle" fill="#1a3000" font-family="Liberation Sans" font-weight="bold">-Y</text><circle cx="601" cy="86" r="5.8" fill="#2e2e2e" fill-opacity="0.55"/><circle cx="601" cy="100.7" r="5.8" fill="#2e2e2e" fill-opacity="0.55"/><circle cx="601" cy="115.4" r="5.8" fill="#2e2e2e" fill-opacity="0.55"/><circle cx="601" cy="130" r="5.8" fill="#2e2e2e" fill-opacity="0.55"/><circle cx="602" cy="85" r="2.6" fill="none" stroke="#ececec" stroke-width="1.1"/><path d="M600.1,87 L597.8,89.3" stroke="#ececec" stroke-width="1.3" stroke-linecap="round"/><path d="M600.9,85 H603.1 M602,83.9 V86.1" stroke="#ececec" stroke-width="0.6"/><path d="M599,100.5 V97.6 M600.4,100 V96.6 M601.8,100 V96.8 M603.2,100.5 V97.8" stroke="#ececec" stroke-width="1" stroke-linecap="round" fill="none"/><path d="M598.5,100 H603.8 V102.5 C603.8,104.3 602.8,105 601.2,105 C599.6,105 598.8,104 598.2,102.8 L597,101 C596.6,100.4 597.4,99.8 598,100.3 Z" fill="#ececec"/><path d="M597.8,113.6 A3.4,3.4 0 0 1 604.2,113.6 M604.2,117.2 A3.4,3.4 0 0 1 597.8,117.2" stroke="#e6e6e6" stroke-width="0.8" fill="none"/><path d="M603.4,112 L604.6,113.9 L602.6,114.1 Z M598.6,118.8 L597.4,116.9 L599.4,116.7 Z" fill="#e6e6e6"/><rect x="599.6" y="114.3" width="2.8" height="2.2" rx="0.4" fill="#e6e6e6"/><path d="M597.6,126.6 H604.4 V133.4 H597.6 Z M599.87,126.6 V133.4 M602.13,126.6 V133.4 M597.6,128.87 H604.4 M597.6,131.13 H604.4" stroke="#e8e8e8" stroke-width="0.65" fill="none"/><circle cx="306.4" cy="186.55" r="3.8" fill="none" stroke="#f0f0f0" stroke-width="0.7"/><circle cx="306.4" cy="186.55" r="3.8" fill="none" stroke="#d05050" stroke-width="0.7" stroke-dasharray="1.5,1.5"/><path d="M306.4,176 V182.5 M306.4,190.6 V197 M298,186.55 H302.4 M310.4,186.55 H315" stroke="#b8aaa8" stroke-width="0.6"/><path d="M430.5,138.7 H435.5 M433,136.2 V141.2" stroke="#e8e8e8" stroke-width="0.5"/><path d="M610.5,43.5 L609,45 L610.5,46.5" stroke="#999" stroke-width="0.6" fill="none"/><path d="M616,390.5 L614.6,392 L616,393.5" stroke="#999" stroke-width="0.6" fill="none"/><path d="M620,13.5 V20.5 M620,15.5 H621.5 M620,19 H621.5" stroke="#ddd" stroke-width="0.7" fill="none"/><rect x="622" y="15" width="5.5" height="1.2" fill="#ddd"/><rect x="622" y="18.3" width="5.5" height="1.2" fill="#ddd"/><circle cx="620" cy="13.8" r="0.9" fill="#ddd"/><path d="M628.5,16.3 L629.8,17.6 L631.1,16.3" stroke="#bbb" stroke-width="0.7" fill="none"/><path d="M637,20 L638.5,15.5 L641.5,13.5 L644.5,15.5 L645,19 L641,20.5 Z" fill="#bdbdbd"/><circle cx="642.5" cy="16.5" r="1.6" fill="#eee"/><path d="M646,16.3 L647.3,17.6 L648.6,16.3" stroke="#bbb" stroke-width="0.7" fill="none"/><circle cx="664.6" cy="15.6" r="2.2" fill="none" stroke="#cfcfcf" stroke-width="0.8"/><path d="M663,17.3 L660.8,19.6" stroke="#cfcfcf" stroke-width="0.9"/><rect x="624.8" y="25" width="8" height="6.8" rx="0.8" fill="#e8e8e8"/><path d="M624.8,27.2 H632.8" stroke="#282828" stroke-width="0.5"/><path d="M627,28.5 L628.8,30 L630.6,28.5" stroke="#282828" stroke-width="0.6" fill="none"/><path d="M615.5,35 V40.5 H621.2" stroke="#e0e0e0" stroke-width="0.6" fill="none" stroke-dasharray="1,0.7"/><circle cx="620.7" cy="35" r="1.3" fill="#fff"/><path d="M627.5,35 L629.3,37 L627.5,39" stroke="#c8d4ec" stroke-width="0.7" fill="none"/><rect x="633" y="32.8" width="9" height="9" rx="1" fill="#5a7ab5"/><path d="M634.8,34.6 L640.2,34.6 L637.5,40 Z" fill="none" stroke="#e8a060" stroke-width="1.1"/><path d="M668.5,40.5 L671.5,37.5 M670.8,36.2 A2,2 0 1 0 673.6,35.8" stroke="#a8c0ee" stroke-width="0.9" fill="none"/><rect x="676.5" y="32.8" width="9.7" height="9" rx="1" fill="#5a7ab5"/><path d="M678,34.3 L684.7,34.3 L681.35,40.3 Z" fill="none" stroke="#3ed0b8" stroke-width="1.1"/><circle cx="719.5" cy="37.3" r="1.2" fill="#e8e8e8"/><rect x="619.5" y="198" width="7" height="3" rx="1.5" fill="#dcdcdc"/><rect x="619.5" y="202" width="7" height="3" rx="1.5" fill="#dcdcdc"/><circle cx="624.8" cy="199.5" r="1" fill="#282828"/><circle cx="621.2" cy="203.5" r="1" fill="#282828"/><path d="M627.5,201 L628.8,202.3 L630.1,201" stroke="#bbb" stroke-width="0.7" fill="none"/><circle cx="653" cy="200.6" r="2.2" fill="none" stroke="#cfcfcf" stroke-width="0.8"/><path d="M651.4,202.3 L649.2,204.6" stroke="#cfcfcf" stroke-width="0.9"/><path d="M619.5,221.5 V216 M619.5,214.5 V215 M622.5,221.5 V217.5 M621,214.5 L622.5,217.5 L624,214.5" stroke="#e0e0e0" stroke-width="0.9" fill="none"/><circle cx="619.5" cy="220.5" r="1.2" fill="#e0e0e0"/><rect x="618.5" y="232" width="6.5" height="5" fill="none" stroke="#d8d8d8" stroke-width="0.8"/><path d="M620,232 L621,230.5 M623.5,232 L622.5,230.5" stroke="#d8d8d8" stroke-width="0.6"/><rect x="618.3" y="245" width="7" height="2" fill="#d8d8d8"/><path d="M618.8,247.5 H624.8 V250.5 H618.8 Z" fill="none" stroke="#d8d8d8" stroke-width="0.6"/><circle cx="621.8" cy="250" r="1.2" fill="#d8d8d8"/><rect x="618.5" y="258" width="6.5" height="6.5" fill="none" stroke="#cfcfcf" stroke-width="0.7"/><path d="M618.5,264.5 L625,258 V264.5 Z" fill="#cfcfcf" opacity="0.6"/><rect x="620.5" y="260" width="2.5" height="2.5" fill="#eee"/><path d="M618.5,277 L620.5,272 L622.5,277 Z" fill="#d8d8d8"/><circle cx="623.5" cy="275.8" r="1.6" fill="none" stroke="#d8d8d8" stroke-width="0.6"/><circle cx="624" cy="272" r="0.9" fill="#d8d8d8"/><circle cx="621.6" cy="287.5" r="3.3" fill="#9a3450"/><path d="M619,286 C620.5,287 622,285.5 623.5,286.5 M620,289.5 L623,288" stroke="#3a1a22" stroke-width="0.6" fill="none"/><rect x="618.8" y="300.5" width="5.5" height="5.5" fill="#c8925a"/><path d="M617.8,299.5 H619.2 M617.8,299.5 V300.9 M625.3,299.5 H623.9 M625.3,299.5 V300.9 M617.8,307 H619.2 M617.8,307 V305.6 M625.3,307 H623.9 M625.3,307 V305.6" stroke="#8a6040" stroke-width="0.6"/><rect x="615" y="311.5" width="13" height="12" rx="1.5" fill="#3a3a3a"/><path d="M618.5,321 L622.5,317 M621.8,315.5 A2.2,2.2 0 1 0 624.8,315" stroke="#6aa0f0" stroke-width="1.2" fill="none"/><path d="M618.6,327 L621.6,331 L624.6,329.5 M621.6,331 L623.5,333" stroke="#5da0e8" stroke-width="0.7" fill="none"/><circle cx="618.6" cy="327" r="0.9" fill="#5da0e8"/><circle cx="624.6" cy="329.5" r="0.9" fill="#5da0e8"/><circle cx="623.5" cy="333" r="0.9" fill="#5da0e8"/><circle cx="621.6" cy="343" r="3" fill="none" stroke="#5da0e8" stroke-width="0.9"/><circle cx="621.6" cy="343" r="1.2" fill="#e0e0e0"/><path d="M618.8,341.5 A3,3 0 0 1 623,340" stroke="#e0e0e0" stroke-width="0.6" fill="none"/><circle cx="621.6" cy="356" r="3.2" fill="#3d6cb8"/><path d="M618.8,357.5 C620,354 623,353 624.5,354.5 M619.5,358.5 C621.5,358.5 623.5,357 624.3,355.5" stroke="#c0d4f0" stroke-width="0.6" fill="none"/><path d="M618.4,366.2 H624.8 L621.6,372.2 Z" fill="none" stroke="#2ec89a" stroke-width="1.1"/><circle cx="621.6" cy="382.3" r="3.3" fill="#c0405a"/><path d="M621.6,379 A3.3,3.3 0 0 1 624.9,382.3 L621.6,382.3 Z" fill="#f0c0c8"/><path d="M618.5,383.5 C620,384.5 622,385 623.5,384" stroke="#5a1a22" stroke-width="0.5" fill="none"/><g fill="#c04060"><rect x="618.3" y="395.5" width="6.6" height="6.6"/></g><path d="M618.3,395.5 h1.65 v1.65 h-1.65z M621.6,395.5 h1.65 v1.65 h-1.65z M619.95,397.15 h1.65 v1.65 h-1.65z M623.25,397.15 h1.65 v1.65 h-1.65z M618.3,398.8 h1.65 v1.65 h-1.65z M621.6,398.8 h1.65 v1.65 h-1.65z M619.95,400.45 h1.65 v1.65 h-1.65z M623.25,400.45 h1.65 v1.65 h-1.65z" fill="#e8a0b0"/><rect x="634.5" y="214.5" width="5" height="5" fill="#e0e0e0"/><path d="M633,213 H634.5 M633,213 V214.5 M641,213 H639.5 M641,213 V214.5 M633,221 H634.5 M633,221 V219.5 M641,221 H639.5 M641,221 V219.5" stroke="#e0e0e0" stroke-width="0.6"/><path d="M666.5,215 L668.5,217 L666.5,219" stroke="#cfcfcf" stroke-width="0.7" fill="none"/><rect x="673" y="213.5" width="6.8" height="6.8" rx="0.5" fill="none" stroke="#cfcfcf" stroke-width="0.6"/><circle cx="676.4" cy="216.9" r="2.1" fill="none" stroke="#e0e0e0" stroke-width="0.8"/><path d="M635.6,249 L637.3,250.7 L639,249" stroke="#cfcfcf" stroke-width="0.7" fill="none"/><rect x="642" y="246" width="7.4" height="7.6" fill="#505050"/><circle cx="645.7" cy="249.8" r="2.3" fill="none" stroke="#e0e0e0" stroke-width="0.8"/><rect x="671.3" y="245.6" width="8.2" height="8.2" fill="#545454"/><path d="M672.8,247 H678 L675.4,252.5 Z" fill="none" stroke="#e8e8e8" stroke-width="0.9"/><rect x="680" y="245.6" width="25" height="8.2" rx="0.5" fill="#4772b3"/><rect x="681.5" y="247.5" width="4.5" height="4.5" fill="none" stroke="#e8e8e8" stroke-width="0.6" stroke-dasharray="1,0.6"/><circle cx="686" cy="247.3" r="1" fill="#fff"/><rect x="689" y="247" width="6" height="4" fill="#e8e8e8"/><path d="M690.5,252.5 H693.5" stroke="#e8e8e8" stroke-width="0.7"/><rect x="697.5" y="247.5" width="6" height="4.5" rx="0.5" fill="#e8e8e8"/><circle cx="700.5" cy="249.7" r="1.3" fill="#4772b3"/><rect x="705.6" y="245.6" width="7" height="8.2" rx="0.5" fill="#282828"/><path d="M707.8,249 L709.0999999999999,250.3 L710.4,249" stroke="#bbb" stroke-width="0.7" fill="none"/><path d="M715.5,248 L718.5,251 M718.5,248 L715.5,251" stroke="#cfcfcf" stroke-width="0.7"/><path d="M674,296.8 L675.6,298.5 L678,295" stroke="#fff" stroke-width="0.8" fill="none"/><path d="M644,310 L645.5,311.5 L644,313" stroke="#cfcfcf" stroke-width="0.7" fill="none"/><path d="M635.8,324.2 L637.5,325.9 L639.2,324.2" stroke="#cfcfcf" stroke-width="0.7" fill="none"/><path d="M642.5,321.5 L644.5,323.5 L645.5,322.5 L646,325" stroke="#d8d8d8" stroke-width="0.7" fill="none"/><circle cx="647.8" cy="327" r="1.8" fill="#e8e8e8"/><rect x="671.3" y="320.7" width="8.2" height="8.5" fill="#545454"/><path d="M672.8,322.3 H678 L675.4,327.8 Z" fill="none" stroke="#e8e8e8" stroke-width="0.9"/><rect x="680" y="320.7" width="25" height="8.5" rx="0.5" fill="#4772b3"/><rect x="681.5" y="322.7" width="4.5" height="4.5" fill="none" stroke="#e8e8e8" stroke-width="0.6" stroke-dasharray="1,0.6"/><circle cx="686" cy="322.5" r="1" fill="#fff"/><rect x="689" y="322.2" width="6" height="4" fill="#e8e8e8"/><path d="M690.5,327.7 H693.5" stroke="#e8e8e8" stroke-width="0.7"/><rect x="697.5" y="322.7" width="6" height="4.5" rx="0.5" fill="#e8e8e8"/><circle cx="700.5" cy="324.9" r="1.3" fill="#4772b3"/><rect x="705.6" y="320.7" width="7" height="8.5" rx="0.5" fill="#282828"/><path d="M707.8,324.3 L709.0999999999999,325.6 L710.4,324.3" stroke="#bbb" stroke-width="0.7" fill="none"/><path d="M715.5,323.3 L718.5,326.3 M718.5,323.3 L715.5,326.3" stroke="#cfcfcf" stroke-width="0.7"/><rect x="713.5" y="334.5" width="7" height="9" fill="#656565"/><path d="M715,336 V342 M715,339 H719" stroke="#eee" stroke-width="0.8"/><path d="M640,361 L641.5,362.5 L640,364" stroke="#cfcfcf" stroke-width="0.7" fill="none"/><path d="M31.5,374.4 L32.8,375.7 L34.1,374.4" stroke="#bbb" stroke-width="0.7" fill="none"/><path d="M60.4,374.4 L61.699999999999996,375.7 L63.0,374.4" stroke="#bbb" stroke-width="0.7" fill="none"/><rect x="253.2" y="370" width="9" height="8.7" rx="1" fill="#545454"/><circle cx="257.7" cy="374.35" r="2.2" fill="none" stroke="#cfcfcf" stroke-width="0.8"/><rect x="262.2" y="370" width="9" height="8.7" rx="1" fill="#2b2b2b"/><path d="M265.5,373.8 L266.8,375.1 L268.1,373.8" stroke="#666" stroke-width="0.7" fill="none"/><rect x="274.7" y="370" width="56.3" height="8.7" rx="1" fill="#545454"/><path d="M276.8,372 V376.8 M281.5,372 L277.6,374.4 L281.5,376.8 Z" stroke="#e8e8e8" stroke-width="0.6" fill="#e8e8e8"/><path d="M286.5,372.2 L288.7,374.4 L286.5,376.6 L284.3,374.4 Z M293,372.2 L289.6,374.4 L293,376.6 Z" fill="#e8e8e8"/><path d="M300,371.6 L295.6,374.4 L300,377.2 Z" fill="#e8e8e8"/><path d="M305.2,371.6 L309.6,374.4 L305.2,377.2 Z" fill="#e8e8e8"/><path d="M313,372.2 L316.4,374.4 L313,376.6 Z M319.5,372.2 L321.7,374.4 L319.5,376.6 L317.3,374.4 Z" fill="#e8e8e8"/><path d="M329.2,372 V376.8 M324.5,372 L328.4,374.4 L324.5,376.8 Z" stroke="#e8e8e8" stroke-width="0.6" fill="#e8e8e8"/><circle cx="521.5" cy="374.6" r="2.6" fill="none" stroke="#e0e0e0" stroke-width="0.8"/><path d="M520.5,371 H522.5 M521.5,374.6 L522.5,373.2 M523.8,372 L524.6,371.4" stroke="#e0e0e0" stroke-width="0.6"/></svg>
</body></html>
